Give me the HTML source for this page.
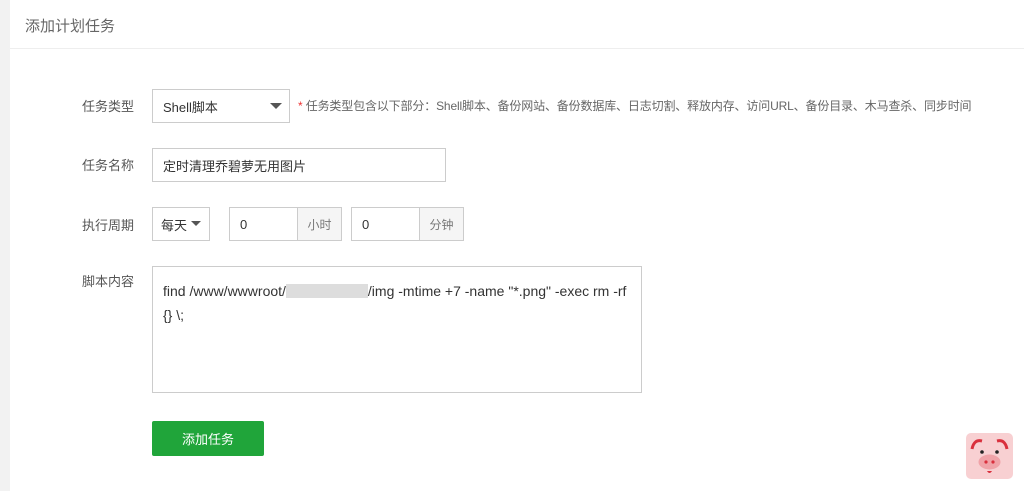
<!DOCTYPE html>
<html><head><meta charset="utf-8"><style>
*{box-sizing:border-box;margin:0;padding:0}
body{width:1024px;height:491px;background:#f2f2f2;font-family:"Liberation Sans","Noto Sans CJK SC",sans-serif;position:relative;overflow:hidden;color:#555}
.panel{position:absolute;left:10px;top:0;right:0;bottom:0;background:#fff}
.hd{position:absolute;left:10px;top:0;right:0;height:49px;border-bottom:1px solid #eee}
.t{position:absolute;left:25px;top:15px;font-size:15px;color:#666}
.a{position:absolute}
.lb{position:absolute;left:82px;font-size:13px;color:#555}
.box{position:absolute;border:1px solid #ccc;background:#fff;font-size:13px;color:#333;padding-left:10px;display:flex;align-items:center}
.add{position:absolute;border:1px solid #ccc;background:#f5f5f5;font-size:12px;color:#777;display:flex;align-items:center;justify-content:center}
.car{position:absolute;width:0;height:0;border-left:6px solid transparent;border-right:6px solid transparent;border-top:6px solid #555}
</style></head><body>
<div class="panel"></div>
<div class="hd"></div>
<div class="t">添加计划任务</div>

<div class="lb" style="top:96px">任务类型</div>
<div class="box" style="left:152px;top:89px;width:138px;height:34px">Shell脚本</div>
<div class="car" style="left:270px;top:103px"></div>
<div class="a" style="left:298px;top:97px;font-size:12px;color:#666;letter-spacing:-0.15px"><span style="color:#e33">*</span> 任务类型包含以下部分：Shell脚本、备份网站、备份数据库、日志切割、释放内存、访问URL、备份目录、木马查杀、同步时间</div>

<div class="lb" style="top:155px">任务名称</div>
<div class="box" style="left:152px;top:148px;width:294px;height:34px">定时清理乔碧萝无用图片</div>

<div class="lb" style="top:215px">执行周期</div>
<div class="box" style="left:152px;top:207px;width:58px;height:34px;padding-left:8px">每天</div>
<div class="car" style="left:191px;top:221px;border-width:5px 5px 0 5px"></div>
<div class="box" style="left:229px;top:207px;width:69px;height:34px">0</div>
<div class="add" style="left:297px;top:207px;width:45px;height:34px">小时</div>
<div class="box" style="left:351px;top:207px;width:69px;height:34px">0</div>
<div class="add" style="left:419px;top:207px;width:45px;height:34px">分钟</div>

<div class="lb" style="top:271px">脚本内容</div>
<div class="a" style="left:152px;top:266px;width:490px;height:127px;border:1px solid #ccc;font-size:14px;color:#333;padding:12px 10px;line-height:24px">find /www/wwwroot/<span style="display:inline-block;width:82px;height:14px;background:#ddd;vertical-align:-2px"></span>/img -mtime +7 -name "*.png" -exec rm -rf<br>{} \;</div>

<div class="a" style="left:152px;top:421px;width:112px;height:35px;background:#20a53a;border-radius:2px;color:#fff;font-size:13px;display:flex;align-items:center;justify-content:center">添加任务</div>

<svg class="a" style="left:966px;top:433px" width="47" height="46" viewBox="0 0 47 46">
<rect x="0" y="0" width="47" height="46" rx="5" fill="#f8d0d2"/>
<path d="M6 16 Q8 6 16 8" stroke="#d9303d" stroke-width="3" fill="none"/>
<path d="M41 16 Q39 6 31 8" stroke="#d9303d" stroke-width="3" fill="none"/>
<circle cx="16" cy="19" r="1.8" fill="#222"/><circle cx="31" cy="19" r="1.8" fill="#222"/>
<ellipse cx="23.5" cy="29" rx="11" ry="7.5" fill="#f0a3a8"/>
<circle cx="20" cy="29" r="1.6" fill="#d9303d"/><circle cx="27" cy="29" r="1.6" fill="#d9303d"/>
<path d="M21 38 h5 q-2.5 4 -5 0z" fill="#d9303d"/>
</svg>
</body></html>
